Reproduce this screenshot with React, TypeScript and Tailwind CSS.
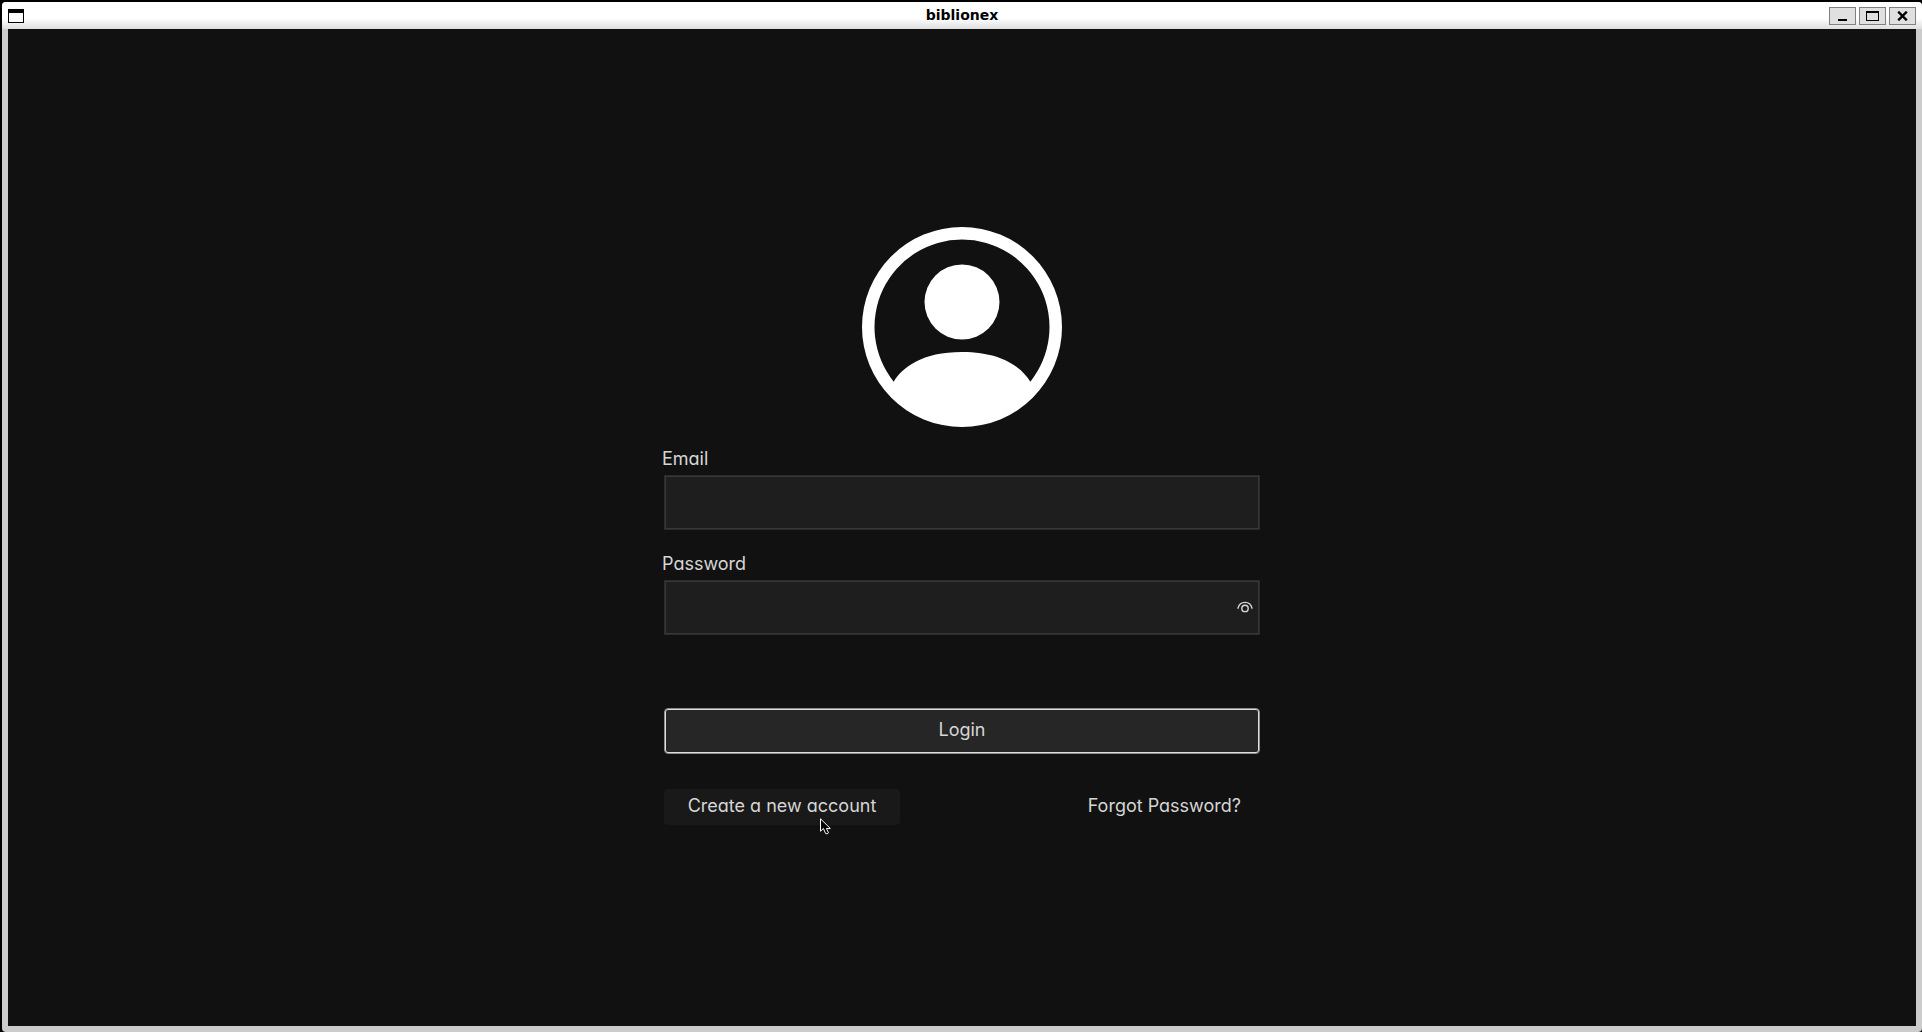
import { useState } from "react";

function TitleBar() {
  const control =
    "flex h-[18px] w-[27px] items-center justify-center border border-[#808080] bg-[#e0e0e0] text-black";
  return (
    <header className="flex h-[27px] shrink-0 items-center justify-between rounded-t-sm bg-linear-to-b from-white from-60% to-[#dedede] px-1.5">
      <div className="flex flex-1">
        <svg width="16" height="14" viewBox="0 0 16 14" shapeRendering="crispEdges" aria-hidden="true">
          <path d="M0 0h16v14H0z" />
          <path d="M1 4h14v9H1z" fill="#fff" />
        </svg>
      </div>
      <h1 className="pb-0.5 font-['DejaVu_Sans',sans-serif] text-sm leading-5 font-bold text-black">biblionex</h1>
      <div className="flex flex-1 justify-end gap-[3px]">
        <button type="button" aria-label="Minimize" className={control}>
          <svg width="9" height="10" viewBox="0 0 9 10" shapeRendering="crispEdges">
            <path d="M0 8h9v2H0z" />
          </svg>
        </button>
        <button type="button" aria-label="Maximize" className={control}>
          <svg width="13" height="10" viewBox="0 0 13 10" shapeRendering="crispEdges">
            <path fillRule="evenodd" d="M0 0h13v10H0zM1 2v7h11V2z" />
          </svg>
        </button>
        <button type="button" aria-label="Close" className={control}>
          <svg width="11" height="10" viewBox="0 0 11 10" fill="none" stroke="#000" strokeWidth="2.4">
            <path d="M1.2.7l8.6 8.6M9.8.7L1.2 9.3" />
          </svg>
        </button>
      </div>
    </header>
  );
}

function Avatar() {
  return (
    <svg className="size-[200px] self-center text-white" viewBox="0 0 16 16" fill="currentColor" role="img" aria-label="User">
      <path d="M11 6a3 3 0 1 1-6 0 3 3 0 0 1 6 0" />
      <path
        fillRule="evenodd"
        d="M0 8a8 8 0 1 1 16 0A8 8 0 0 1 0 8m8-7a7 7 0 0 0-5.468 11.37C3.242 11.226 4.805 10 8 10s4.757 1.225 5.468 2.37A7 7 0 0 0 8 1"
      />
    </svg>
  );
}

function Pointer() {
  return (
    <svg
      className="pointer-events-none absolute top-[29px] left-[156px]"
      width="11"
      height="17"
      viewBox="0 0 11 17"
      fill="#000"
      stroke="#fff"
      aria-hidden="true"
    >
      <path d="M.5.8v12.4l2.9-2.7 2.2 4.9q1.6 1.2 2.9-.6L6.4 10.5h3.9z" />
    </svg>
  );
}

const field =
  "block h-[55px] w-full border border-[#2b2b2b] bg-[#1e1e1e] px-3 shadow-[inset_0_0_0_1px_#383838] outline-none";
const linkButton = "relative h-9 rounded-sm pb-0.5";

export default function App() {
  const [visible, setVisible] = useState(false);
  return (
    <div className="flex min-h-screen flex-col bg-black pt-0.5 pl-0.5">
      <div className="flex flex-1 flex-col rounded-sm bg-[#cccccc]">
        <TitleBar />
        <main className="mx-1.5 mb-1.5 flex flex-1 flex-col items-center justify-center bg-[#111111] pb-[3px] font-[Inter,sans-serif] text-lg leading-6 font-normal text-[#d6d6d6] [font-feature-settings:'cv11']">
          <form className="flex w-full max-w-[596px] flex-col" onSubmit={(e) => e.preventDefault()}>
            <Avatar />
            <label htmlFor="email" className="-ml-1 mt-5 px-0.5">
              Email
            </label>
            <input id="email" type="email" className={`${field} mt-1`} />
            <label htmlFor="password" className="-ml-1 mt-[22px] px-0.5">
              Password
            </label>
            <div className="relative mt-1">
              <input id="password" type={visible ? "text" : "password"} className={`${field} pr-10`} />
              <button
                type="button"
                aria-label="Show password"
                onClick={() => setVisible(!visible)}
                className="absolute inset-y-0 right-[7px] flex items-center pb-0.5"
              >
                <svg width="16" height="12" viewBox="0 0 16 12" fill="none" stroke="currentColor" strokeWidth="1.4" strokeLinecap="round">
                  <path d="M1 7.2C3 -.6 13 -.6 15 7.2" />
                  <circle cx="8" cy="7.4" r="3.2" />
                </svg>
              </button>
            </div>
            <button
              type="submit"
              className="mt-[73px] h-[46px] rounded border border-[#8c8c8c] bg-[#262626] pb-0.5 shadow-[inset_0_0_0_1px_#dedede]"
            >
              Login
            </button>
            <div className="mt-[35px] flex justify-between">
              <button type="button" className={`${linkButton} w-[236px] bg-[#191919]`}>
                Create a new account
                <Pointer />
              </button>
              <button type="button" className={`${linkButton} px-[19px]`}>
                Forgot Password?
              </button>
            </div>
          </form>
        </main>
      </div>
    </div>
  );
}
